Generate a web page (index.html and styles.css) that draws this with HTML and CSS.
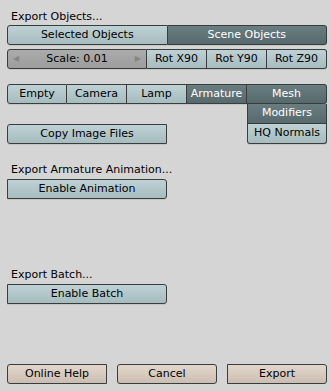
FILE: index.html
```html
<!DOCTYPE html>
<html lang="en">
<head>
    <meta charset="UTF-8">
    <title>Export Objects</title>
    <link rel="stylesheet" href="styles.css">
</head>
<body>
    <div id="panel">
        <div class="label first">Export Objects...</div>
        <div class="row row-objects">
            <div class="btn">Selected Objects</div>
            <div class="btn on">Scene Objects</div>
        </div>
        <div class="row row-scale">
            <div class="btn slider w140">
                <span class="arrow">&#9664;</span>
                <span>Scale: 0.01</span>
                <span class="arrow">&#9654;</span>
            </div>
            <div class="btn w60">Rot X90</div>
            <div class="btn w60">Rot Y90</div>
            <div class="btn w60">Rot Z90</div>
        </div>
        <div class="row row-types">
            <div class="btn w60">Empty</div>
            <div class="btn w60">Camera</div>
            <div class="btn w60">Lamp</div>
            <div class="btn w60 on">Armature</div>
            <div class="btn w80 on">Mesh</div>
        </div>
        <div class="row row-options">
            <div class="btn single w160 copy">Copy Image Files</div>
            <div class="mesh-options">
                <div class="btn on sub">Modifiers</div>
                <div class="btn sub last">HQ Normals</div>
            </div>
        </div>
        <div class="label anim">Export Armature Animation...</div>
        <div class="row">
            <div class="btn single w160">Enable Animation</div>
        </div>
        <div class="label batch">Export Batch...</div>
        <div class="row">
            <div class="btn single w160">Enable Batch</div>
        </div>
        <div class="row row-bottom">
            <div class="btn single beige w100">Online Help</div>
            <div class="btn single beige w100">Cancel</div>
            <div class="btn single beige w100">Export</div>
        </div>
    </div>
</body>
</html>
```

FILE: styles.css
```css
body {
    margin: 0;
    background: #d5d5d5;
    font-family: "DejaVu Sans", Verdana, sans-serif;
    font-size: 11px;
    color: #000;
}
#panel {
    width: 320px;
    padding: 0 4px 0 7px;
}
.label {
    height: 13px;
    line-height: 13px;
    padding-left: 4px;
    margin-bottom: 3px;
}
.label.first {
    margin-top: 10px;
    margin-bottom: 2px;
}
.label.anim {
    margin-top: 19px;
}
.label.batch {
    margin-top: 69px;
}
.row {
    display: flex;
}
.row-scale {
    margin-top: 4px;
}
.row-types {
    margin-top: 15px;
}
.row-bottom {
    margin-top: 60px;
    justify-content: space-between;
}
.btn {
    box-sizing: border-box;
    height: 20px;
    line-height: 18px;
    flex: 1;
    text-align: center;
    border: 1px solid #3a3d3e;
    border-left: none;
    background: linear-gradient(#bfd1d4, #a6bcbf);
    box-shadow: 0 1px 0 #c4c4c4;
    white-space: nowrap;
}
.row > .btn:first-child {
    border-left: 1px solid #3a3d3e;
    border-radius: 3px 0 0 3px;
}
.row > .btn:last-child {
    border-radius: 0 3px 3px 0;
}
.btn.single {
    border-left: 1px solid #3a3d3e;
    border-radius: 3px;
}
.btn.on {
    background: linear-gradient(#6a7e81, #56696c);
    color: #fff;
}
.w60 { flex: 0 0 60px; }
.w80 { flex: 0 0 80px; }
.w100 { flex: 0 0 100px; }
.w140 { flex: 0 0 140px; }
.w160 { flex: 0 0 160px; }
.slider {
    display: flex;
    justify-content: space-between;
    align-items: center;
    padding: 0 5px;
    background: linear-gradient(#ababab, #9d9d9d);
}
.arrow {
    font-size: 8px;
    color: #858585;
}
.copy {
    margin-top: 20px;
}
.mesh-options {
    margin-left: auto;
    width: 80px;
    display: flex;
    flex-direction: column;
}
.btn.sub {
    flex: 0 0 20px;
    border-left: 1px solid #3a3d3e;
    border-top: none;
}
.btn.sub.last {
    border-radius: 0 0 3px 3px;
}
.btn.beige {
    background: linear-gradient(#e3d7cd, #cbbdb2);
}
```
